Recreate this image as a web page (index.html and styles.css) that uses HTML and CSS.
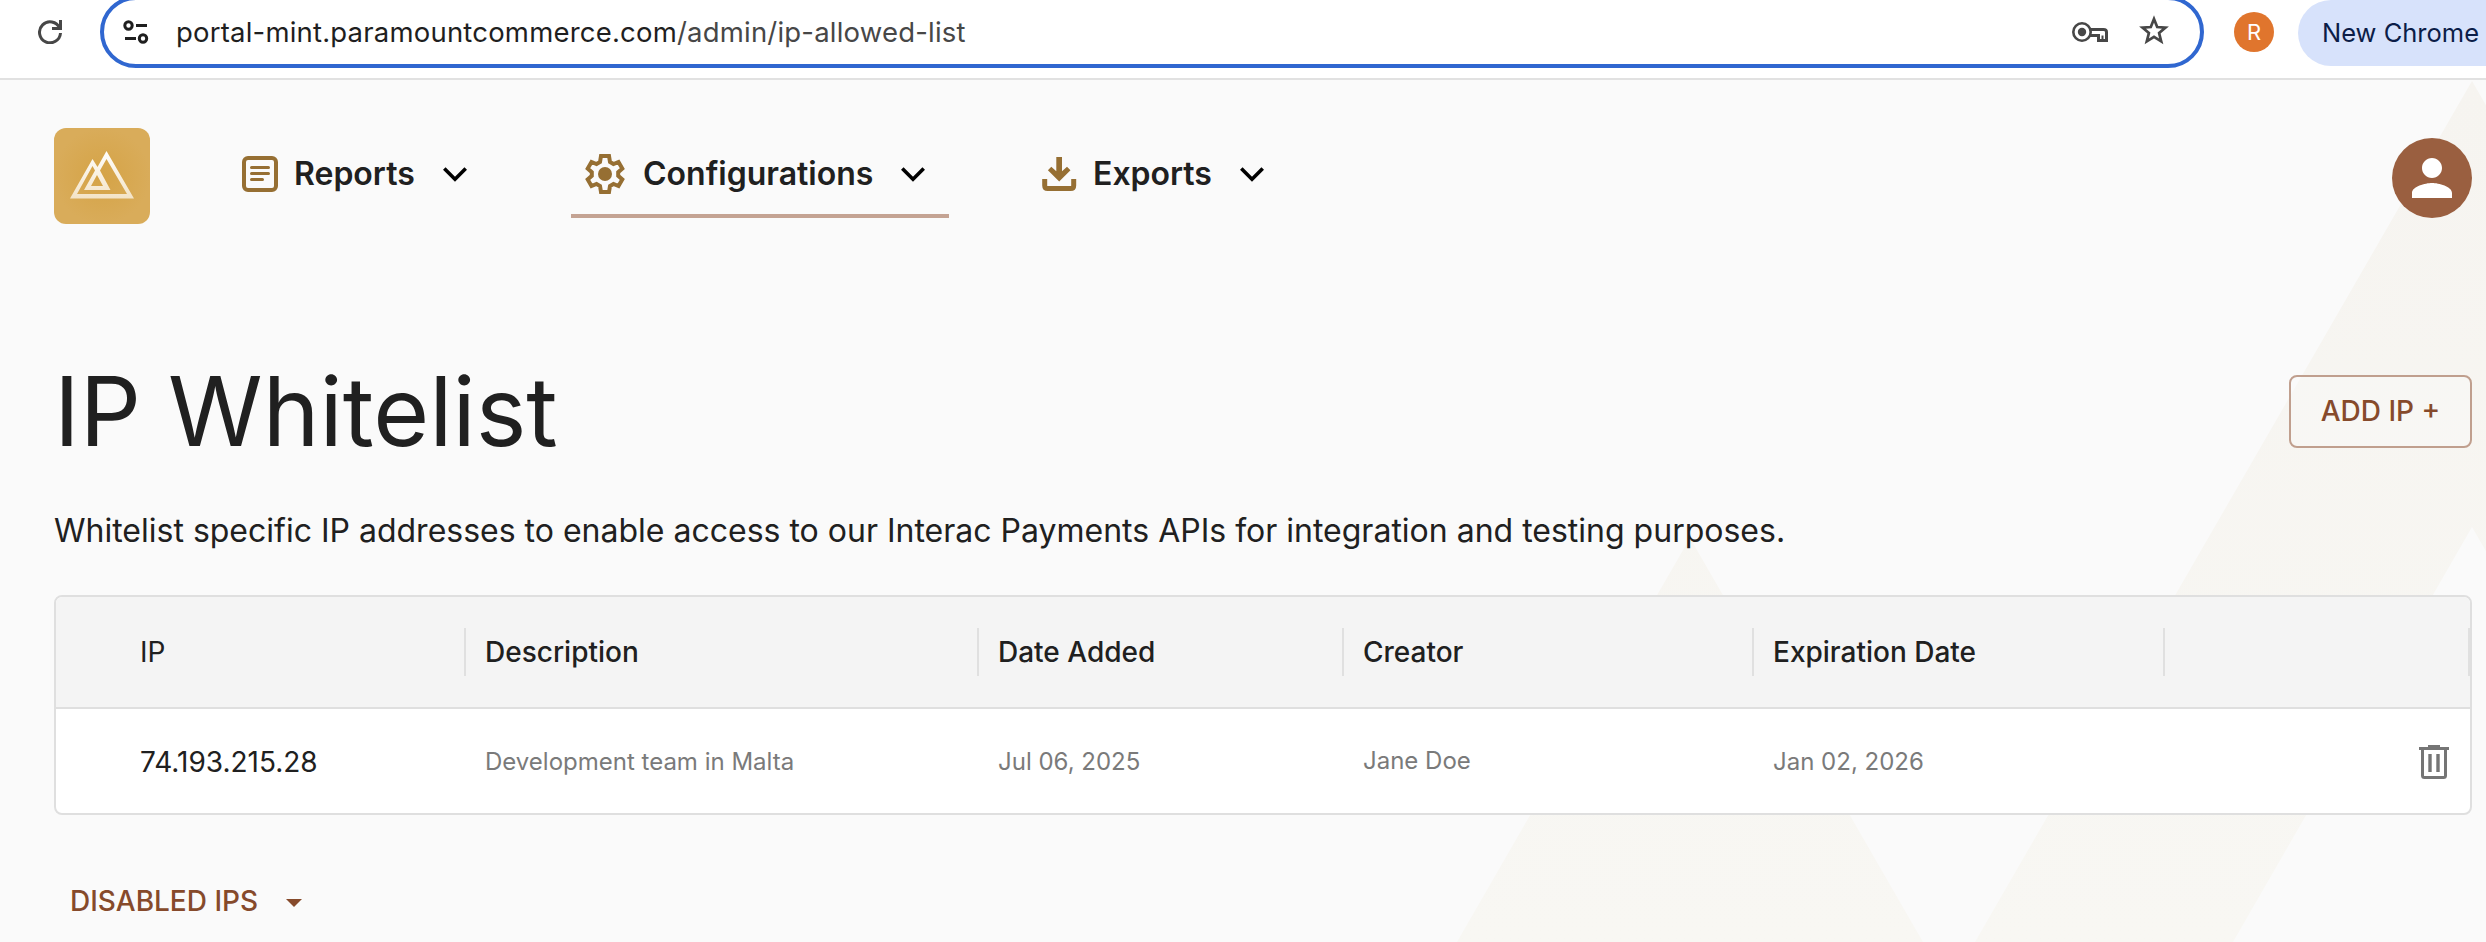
FILE: index.html
```html
<!DOCTYPE html>
<html lang="en">
<head>
<meta charset="utf-8">
<title>IP Whitelist</title>
<link rel="stylesheet" href="styles.css">
</head>
<body>
<header class="browser">
  <svg class="reload" width="24" height="24" viewBox="0 0 24 24" fill="none" stroke="#474747" stroke-width="3"><path d="M21.600 8A10.500 10.500 0 1 0 22.500 13"/><path d="M22.500 0V8.500H14" /></svg>
  <div class="omnibox">
    <svg class="tune" width="26" height="24" viewBox="0 0 26 24" fill="none" stroke="#1f1f1f" stroke-width="3"><circle cx="5.500" cy="5.500" r="3.700"/><path d="M13 5.500H24M2 18.500H13"/><circle cx="20" cy="18.500" r="3.700"/></svg>
    <span class="url">portal-mint.paramountcommerce.com<span class="path">/admin/ip-allowed-list</span></span>
    <svg class="key" width="36" height="20" viewBox="0 0 36 20"><path d="M17.500 7.500H31.500Q34.500 7.500 34.500 10V18.500H26.500V13.500H18" fill="none" stroke="#474747" stroke-width="3"/><path d="M30.500 13.500V18" stroke="#474747" stroke-width="2"/><circle cx="10" cy="10" r="8.700" fill="#fff" stroke="#474747" stroke-width="2.600"/><circle cx="10" cy="10" r="4.200" fill="#474747"/></svg>
    <svg class="star" width="32" height="30" viewBox="0 0 32 30" fill="none" stroke="#474747" stroke-width="2.700"><path d="M16 4L19.200 12L27.500 12.600L21.100 18L23.200 26.300L16 21.800L8.800 26.300L10.900 18L4.500 12.600L12.800 12Z"/></svg>
  </div>
  <span class="profile">R</span>
  <span class="update">New Chrome</span>
</header>
<div class="page">
  <svg class="backdrop" width="2486" height="862" viewBox="0 80 2486 862">
    <defs><linearGradient id="sand" x1="0" y1="80" x2="0" y2="942" gradientUnits="userSpaceOnUse"><stop offset="0" stop-color="#f6f4f0"/><stop offset="1" stop-color="#f8f7f3"/></linearGradient></defs>
    <path fill="url(#sand)" d="M2472 81L1975 942H2233L2472 527L2711 942H2969Z"/>
    <path fill="url(#sand)" d="M1690 538L1457 942H1923Z"/>
  </svg>
  <nav class="nav">
    <svg class="logo" width="96" height="96" viewBox="0 0 96 96">
      <defs>
        <radialGradient id="gold"><stop offset="0" stop-color="#d5a346"/><stop offset="1" stop-color="#d9ac5a"/></radialGradient>
        <linearGradient id="cream" x1="0" y1="22" x2="0" y2="71" gradientUnits="userSpaceOnUse"><stop offset="0" stop-color="#fff"/><stop offset="1" stop-color="#f3e3c6"/></linearGradient>
      </defs>
      <rect width="96" height="96" rx="12" fill="url(#gold)"/>
      <path fill="url(#cream)" fill-rule="evenodd" d="M52.500 23L80 70.500H16L38.500 31L43.500 39Z M52.500 31L46 42.500L56.500 62H30L41 42.500L38.500 38L23 66H73Z M43 47L37 58H49Z"/>
    </svg>
    <a class="item reports">
      <svg width="36" height="36" viewBox="0 0 36 36" fill="none" stroke="#966f33"><rect x="2" y="2" width="32" height="32" rx="4" stroke-width="4"/><path d="M9.500 11.500H26.500M9.500 17.500H26.500M9.500 23.500H20.500" stroke-width="3" stroke-linecap="round"/></svg>
      <span class="label">Reports</span>
      <svg class="chev" width="24" height="15" viewBox="0 0 24 15"><path d="M1.300 1.600L12 12.300L22.700 1.600" fill="none" stroke="#000" stroke-width="3.600"/></svg>
    </a>
    <a class="item active config">
      <svg width="40" height="40" viewBox="0 0 40 40"><path fill="none" stroke="#966f33" stroke-width="4" d="M16 2H24L25 8L28.500 10L33.500 8L37.300 14.600L33.200 18.200V21.800L37.300 25.400L33.500 32L28.500 30L25 32L24 38H16L15 32L11.500 30L6.500 32L2.700 25.400L6.800 21.800V18.200L2.700 14.600L6.500 8L11.500 10L15 8Z"/><circle cx="20" cy="20" r="7" fill="#966f33"/></svg>
      <span class="label">Configurations</span>
      <svg class="chev" width="24" height="15" viewBox="0 0 24 15"><path d="M1.300 1.600L12 12.300L22.700 1.600" fill="none" stroke="#000" stroke-width="3.600"/></svg>
    </a>
    <a class="item exports">
      <svg width="35" height="35" viewBox="0 0 35 35"><path fill="#966f33" d="M14.300 0H20V14.300L25 9.700L28.500 13.200L17.200 24.600L5.900 13.200L9.300 9.700L14.300 14.300Z"/><path d="M2.700 22V28.500Q2.700 31.500 5.700 31.500H28.700Q31.700 31.500 31.700 28.500V22" fill="none" stroke="#966f33" stroke-width="5"/></svg>
      <span class="label">Exports</span>
      <svg class="chev" width="24" height="15" viewBox="0 0 24 15"><path d="M1.300 1.600L12 12.300L22.700 1.600" fill="none" stroke="#000" stroke-width="3.600"/></svg>
    </a>
    <span class="avatar"><svg width="40" height="40" viewBox="4 4 16 16"><path fill="#fff" d="M12 12c2.210 0 4-1.790 4-4s-1.790-4-4-4-4 1.790-4 4 1.790 4 4 4zm0 2c-2.670 0-8 1.340-8 4v2h16v-2c0-2.660-5.330-4-8-4z"/></svg></span>
  </nav>
  <main class="main">
    <div class="heading"><h1>IP Whitelist</h1><button class="add">ADD IP +</button></div>
    <p class="intro">Whitelist specific IP addresses to enable access to our Interac Payments APIs for integration and testing purposes.</p>
    <div class="table">
      <div class="row head"><span class="ip">IP</span><span>Description</span><span>Date Added</span><span>Creator</span><span>Expiration Date</span><span></span></div>
      <div class="row body"><span class="ip">74.193.215.28</span><span>Development team in Malta</span><span>Jul 06, 2025</span><span class="creator">Jane Doe</span><span>Jan 02, 2026</span><span class="action"><svg width="32" height="35" viewBox="0 0 32 35" fill="none" stroke="#757575" stroke-width="3"><path d="M10 1.500H22M1 3.500H31M4.500 4V30.500Q4.500 32.500 6.500 32.500H25.500Q27.500 32.500 27.500 30.500V4"/><path d="M12 9V27M20 9V27" stroke-width="3.400"/></svg></span></div>
    </div>
    <button class="disabled">DISABLED IPS<svg width="16" height="8" viewBox="0 0 16 8"><path fill="#864a2b" d="M0 0H16L8 8Z"/></svg></button>
  </main>
</div>
</body>
</html>
```
FILE: styles.css
```css
* { box-sizing: border-box; }
body { margin: 0; width: 2486px; height: 942px; overflow: hidden; background: #fafafa; font-family: Inter, "Liberation Sans", sans-serif; color: #202020; }
svg { display: block; flex: none; }
.browser { height: 80px; background: #fff; border-bottom: 2px solid #e1e1e1; display: flex; align-items: flex-start; padding-left: 38px; overflow: hidden; }
.reload { margin-top: 20px; }
.omnibox { width: 2104px; height: 72px; margin: -4px 0 0 38px; border: 4px solid #3067d0; border-radius: 36px; display: flex; align-items: center; padding-left: 19px; flex: none; }
.url { margin-left: 27px; flex: 1; font-size: 27.500px; line-height: 34px; letter-spacing: .2px; color: #1f1f1f; white-space: nowrap; }
.path { color: #474747; }
.star { margin: -4px 30px 0 30px; }
.profile { width: 40px; height: 40px; margin: 12px 0 0 30px; border-radius: 50%; background: #e0752d; color: #fff; font-size: 22px; line-height: 40px; text-align: center; flex: none; }
.update { height: 66px; margin-left: 24px; padding-left: 24px; flex: 1; border-radius: 33px 0 0 33px; background: #d7e2fb; color: #0b1d48; font-size: 25.500px; line-height: 66px; white-space: nowrap; }
.page { position: relative; height: 862px; padding: 0 14px 0 54px; overflow: hidden; }
.backdrop { position: absolute; left: 0; top: 0; }
.nav, .main { position: relative; }
.nav { display: flex; padding-top: 48px; height: 144px; }
.item { height: 90px; display: flex; align-items: center; padding: 6px 24px 0 14px; border-bottom: 4px solid transparent; font-weight: 600; font-size: 32px; line-height: 40px; white-space: nowrap; }
.active { border-color: #c4a393; }
.reports { width: 263px; margin-left: 78px; }
.config { width: 378px; margin-left: 80px; }
.exports { width: 260px; margin-left: 79px; }
.label { margin-left: 16px; flex: 1; }
.config .label { margin-left: 18px; }
.avatar { margin: 10px 0 0 auto; width: 80px; height: 80px; border-radius: 50%; background: #9a5f40; display: flex; align-items: center; justify-content: center; }
.heading { display: flex; justify-content: space-between; padding-top: 129px; height: 260px; }
h1 { margin: 0; font-weight: 400; font-size: 96px; line-height: 116px; }
button { font-family: inherit; background: none; border: 0; color: #864a2b; font-size: 28px; font-weight: 500; }
.add { width: 183px; height: 73px; margin-top: 22px; padding: 0 0 2px; border: 2px solid #c09f8e; border-radius: 8px; background: rgba(250,250,250,.4); white-space: nowrap; }
.intro { margin: 27px 0 0; height: 84px; font-size: 32px; line-height: 40px; white-space: nowrap; }
.table { height: 220px; border: 2px solid #dfdfdf; border-radius: 8px; overflow: hidden; background: #fff; }
.row { display: grid; grid-template-columns: 410px 513px 365px 410px 411px 1fr; align-items: center; }
.head { height: 112px; background: #f4f4f4; border-bottom: 2px solid #dfdfdf; font-size: 28px; font-weight: 500; }
.head span { height: 48px; line-height: 48px; padding-left: 19px; border-right: 2px solid #e0e0e0; }
.body { height: 106px; font-size: 24px; color: #7a7a7a; }
.body span { padding-left: 19px; line-height: 34px; }
.row .ip { padding-left: 84px; font-weight: 400; color: #202020; font-size: 28px; }
.row .creator { padding-left: 19px; margin-top: -3px; }
.body .action { display: flex; justify-content: flex-end; padding-right: 20px; }
.disabled { display: flex; align-items: center; margin-top: 66px; height: 40px; padding: 0 0 0 16px; }
.disabled svg { margin: 3px 0 0 28px; }
```
